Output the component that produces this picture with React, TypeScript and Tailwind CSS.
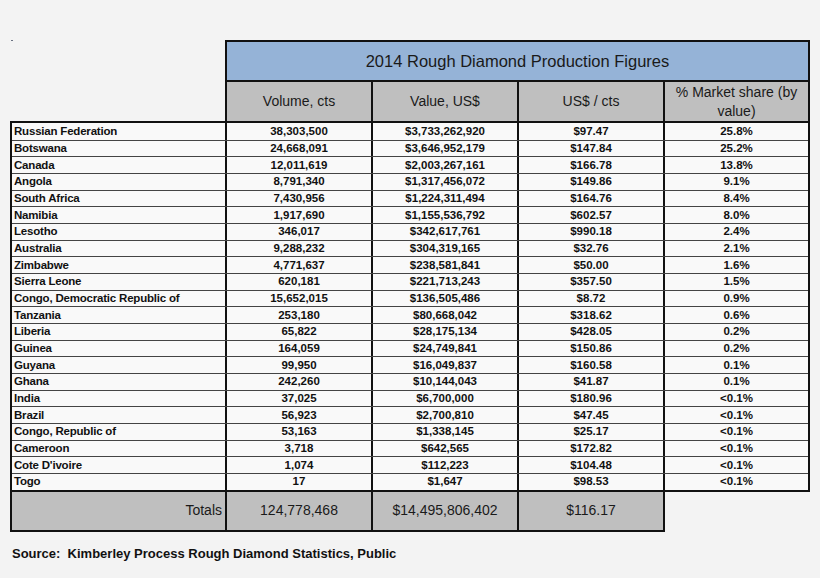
const rows: [string, string, string, string, string][] = [
  ["Russian Federation", "38,303,500", "$3,733,262,920", "$97.47", "25.8%"],
  ["Botswana", "24,668,091", "$3,646,952,179", "$147.84", "25.2%"],
  ["Canada", "12,011,619", "$2,003,267,161", "$166.78", "13.8%"],
  ["Angola", "8,791,340", "$1,317,456,072", "$149.86", "9.1%"],
  ["South Africa", "7,430,956", "$1,224,311,494", "$164.76", "8.4%"],
  ["Namibia", "1,917,690", "$1,155,536,792", "$602.57", "8.0%"],
  ["Lesotho", "346,017", "$342,617,761", "$990.18", "2.4%"],
  ["Australia", "9,288,232", "$304,319,165", "$32.76", "2.1%"],
  ["Zimbabwe", "4,771,637", "$238,581,841", "$50.00", "1.6%"],
  ["Sierra Leone", "620,181", "$221,713,243", "$357.50", "1.5%"],
  ["Congo, Democratic Republic of", "15,652,015", "$136,505,486", "$8.72", "0.9%"],
  ["Tanzania", "253,180", "$80,668,042", "$318.62", "0.6%"],
  ["Liberia", "65,822", "$28,175,134", "$428.05", "0.2%"],
  ["Guinea", "164,059", "$24,749,841", "$150.86", "0.2%"],
  ["Guyana", "99,950", "$16,049,837", "$160.58", "0.1%"],
  ["Ghana", "242,260", "$10,144,043", "$41.87", "0.1%"],
  ["India", "37,025", "$6,700,000", "$180.96", "<0.1%"],
  ["Brazil", "56,923", "$2,700,810", "$47.45", "<0.1%"],
  ["Congo, Republic of", "53,163", "$1,338,145", "$25.17", "<0.1%"],
  ["Cameroon", "3,718", "$642,565", "$172.82", "<0.1%"],
  ["Cote D'ivoire", "1,074", "$112,223", "$104.48", "<0.1%"],
  ["Togo", "17", "$1,647", "$98.53", "<0.1%"],
];

const App: React.FC = () => {
  return (
    <div className="w-[820px] h-[578px] bg-[#f3f3f3] pt-[40px] font-['Liberation_Sans',Arial,sans-serif] text-[#111]">
      {/* title + column headers */}
      <div className="flex pl-[10px]">
        <div className="w-[215px] pl-px">
          <div className="w-[2px] h-px bg-gray-500" />
        </div>
        <div className="w-[585px] border-2 border-b-0 border-[#111]">
          <div className="h-[40px] bg-[#95b3d7] border-b-2 border-[#111] flex items-center justify-center text-[16.5px] text-[#1a1a1a]">
            2014 Rough Diamond Production Figures
          </div>
          <div className="h-[39px] flex bg-[#bfbfbf] text-[14px] text-[#1a1a1a]">
            <div className="w-[144px] flex items-center justify-center">Volume, cts</div>
            <div className="w-[146px] border-l-2 border-[#111] flex items-center justify-center">
              Value, US$
            </div>
            <div className="w-[146px] border-l-2 border-[#111] flex items-center justify-center">
              US$ / cts
            </div>
            <div className="w-[145px] border-l-2 border-[#111] flex items-center justify-center text-center leading-[19px]">
              % Market share (by
              <br />
              value)
            </div>
          </div>
        </div>
      </div>

      {/* data rows */}
      <div className="ml-[10px] w-[800px] border-2 border-[#111] bg-[#f9f9f9] text-[11.5px] font-bold">
        {rows.map((r, i) => (
          <div
            key={r[0]}
            className={
              i === 0
                ? "h-[16.68px] flex"
                : "h-[16.68px] flex border-t border-[#444]"
            }
          >
            <div className="w-[213px] pl-[2px] flex items-center whitespace-nowrap tracking-[-0.2px]">
              {r[0]}
            </div>
            <div className="w-[146px] border-l-2 border-[#111] flex items-center justify-center">
              {r[1]}
            </div>
            <div className="w-[146px] border-l-2 border-[#111] flex items-center justify-center">
              {r[2]}
            </div>
            <div className="w-[146px] border-l-2 border-[#111] flex items-center justify-center">
              {r[3]}
            </div>
            <div className="w-[145px] border-l-2 border-[#111] flex items-center justify-center">
              {r[4]}
            </div>
          </div>
        ))}
      </div>

      {/* totals */}
      <div className="ml-[10px] w-[655px] h-[42px] -mt-[2px] border-2 border-[#111] bg-[#bfbfbf] flex text-[14px] text-[#1a1a1a]">
        <div className="w-[213px] flex items-center justify-end pr-[3px]">Totals</div>
        <div className="w-[146px] border-l-2 border-[#111] flex items-center justify-center">
          124,778,468
        </div>
        <div className="w-[146px] border-l-2 border-[#111] flex items-center justify-center">
          $14,495,806,402
        </div>
        <div className="w-[146px] border-l-2 border-[#111] flex items-center justify-center">
          $116.17
        </div>
      </div>

      <p className="mt-[12px] ml-[12px] text-[13px] font-bold text-[#111]">
        Source:&nbsp; Kimberley Process Rough Diamond Statistics, Public
      </p>
    </div>
  );
};

export default App;
